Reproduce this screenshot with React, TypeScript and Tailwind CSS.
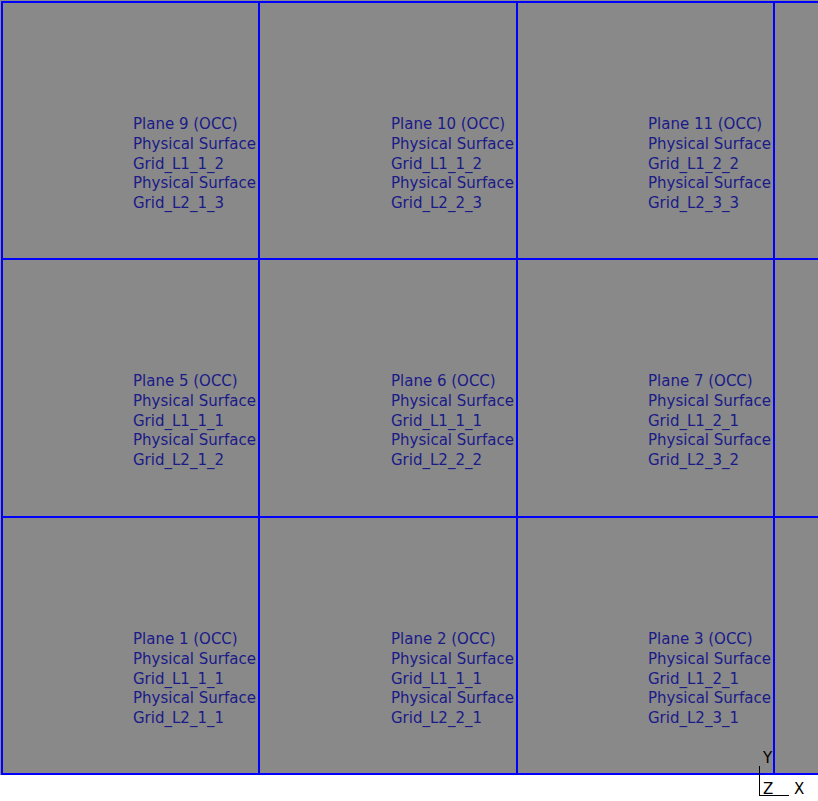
import { Fragment } from "react";

const rows = [
  [
    { plane: "Plane 9 (OCC)", l1: "Grid_L1_1_2", l2: "Grid_L2_1_3" },
    { plane: "Plane 10 (OCC)", l1: "Grid_L1_1_2", l2: "Grid_L2_2_3" },
    { plane: "Plane 11 (OCC)", l1: "Grid_L1_2_2", l2: "Grid_L2_3_3" },
  ],
  [
    { plane: "Plane 5 (OCC)", l1: "Grid_L1_1_1", l2: "Grid_L2_1_2" },
    { plane: "Plane 6 (OCC)", l1: "Grid_L1_1_1", l2: "Grid_L2_2_2" },
    { plane: "Plane 7 (OCC)", l1: "Grid_L1_2_1", l2: "Grid_L2_3_2" },
  ],
  [
    { plane: "Plane 1 (OCC)", l1: "Grid_L1_1_1", l2: "Grid_L2_1_1" },
    { plane: "Plane 2 (OCC)", l1: "Grid_L1_1_1", l2: "Grid_L2_2_1" },
    { plane: "Plane 3 (OCC)", l1: "Grid_L1_2_1", l2: "Grid_L2_3_1" },
  ],
];

type Label = { plane: string; l1: string; l2: string };

function Cell({ label, pad }: { label: Label; pad: string }) {
  return (
    <div className={`border-r-2 border-b-2 border-[#0000ff] pt-[112px] ${pad}`}>
      <div className="whitespace-nowrap text-[15px] leading-[19.75px] text-[#1a1a88]">
        <div>{label.plane}</div>
        <div>Physical Surface</div>
        <div>{label.l1}</div>
        <div>Physical Surface</div>
        <div>{label.l2}</div>
      </div>
    </div>
  );
}

export default function App() {
  return (
    <div
      className="relative w-[818px] h-[801px] bg-white overflow-hidden"
      style={{ fontFamily: '"DejaVu Sans", sans-serif' }}
    >
      <div className="h-[775px] bg-[#898989] pl-px pt-px">
        <div className="grid grid-cols-[257px_258px_257px_1fr] grid-rows-[257px_258px_257px] border-l-2 border-t-2 border-[#0000ff]">
          {rows.map((row, i) => (
            <Fragment key={i}>
              {row.map((label, j) => (
                <Cell key={j} label={label} pad={j === 1 ? "pl-[131px]" : "pl-[130px]"} />
              ))}
              <div className="border-b-2 border-[#0000ff]" />
            </Fragment>
          ))}
        </div>
      </div>

      {/* axis gizmo, drawn over the view corner */}
      <div className="absolute left-[759px] top-[766px] w-[30px] h-[30px] border-l border-b border-black" />
      <span className="absolute left-[763px] top-[749px] text-[15px] leading-[18px] text-black">Y</span>
      <span className="absolute left-[763px] top-[780px] text-[15px] leading-[18px] text-black">Z</span>
      <span className="absolute left-[794px] top-[780px] text-[15px] leading-[18px] text-black">X</span>
    </div>
  );
}
